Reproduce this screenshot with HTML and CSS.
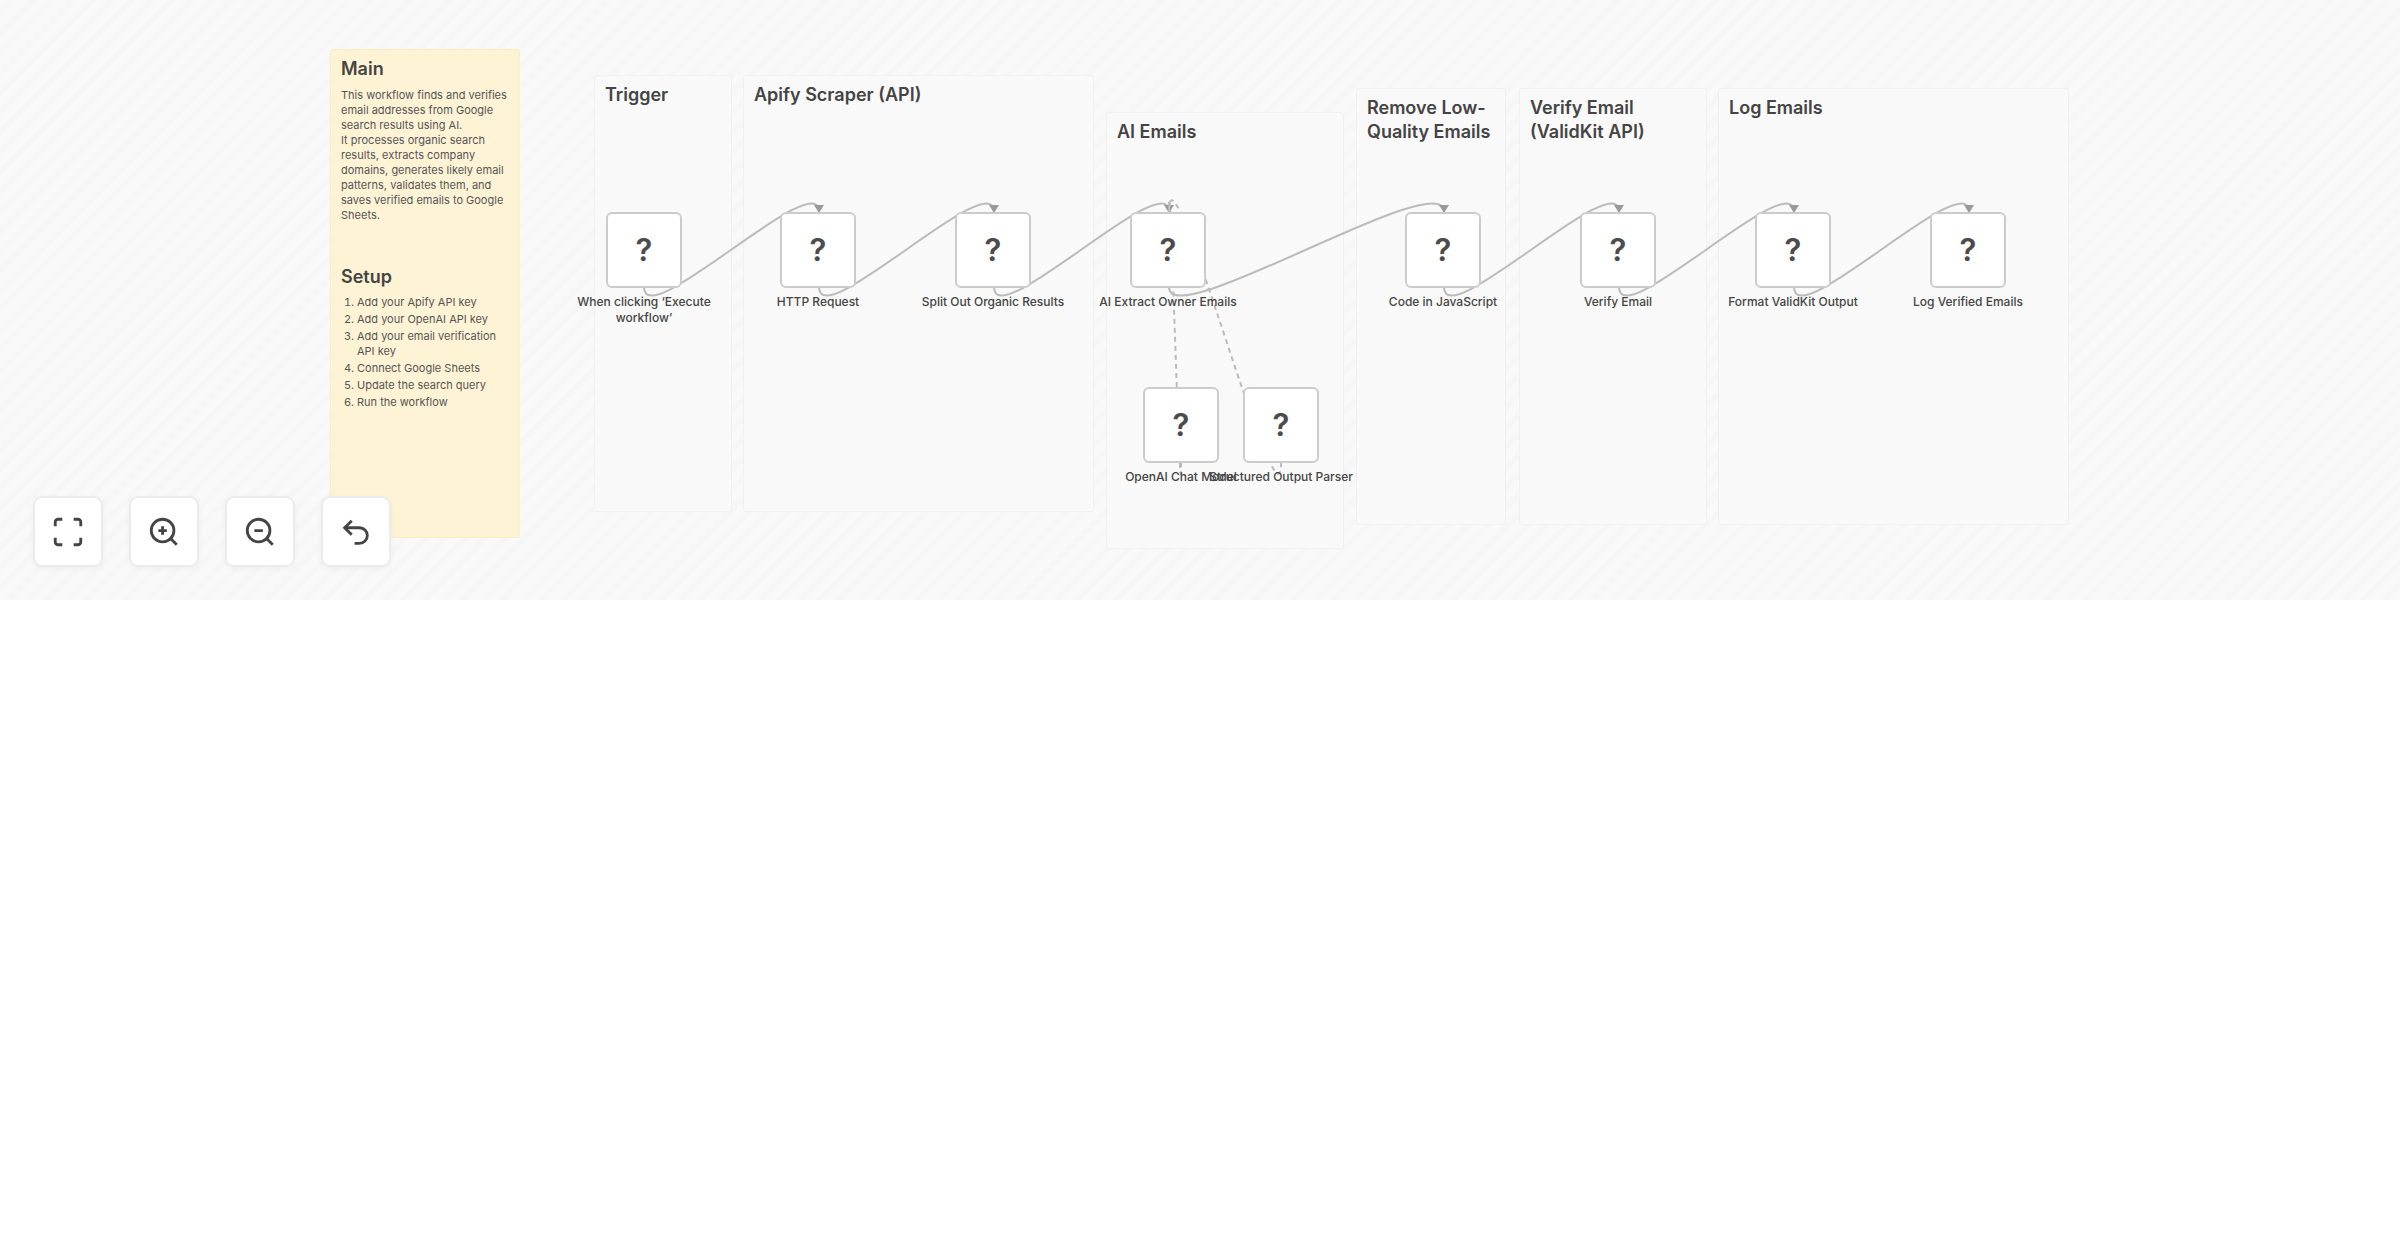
FILE: index.html
```
<!DOCTYPE html>
<html lang="en">
<head>
<meta charset="utf-8">
<title>Email finder workflow</title>
<link rel="stylesheet" href="styles.css">
</head>
<body>
<main class="canvas">
  <section class="sticky sticky-main">
    <h2>Main</h2>
    <p>This workflow finds and verifies email addresses from Google search results using AI.<br>It processes organic search results, extracts company domains, generates likely email patterns, validates them, and saves verified emails to Google Sheets.</p>
    <h2>Setup</h2>
    <ol>
      <li>Add your Apify API key</li>
      <li>Add your OpenAI API key</li>
      <li>Add your email verification API key</li>
      <li>Connect Google Sheets</li>
      <li>Update the search query</li>
      <li>Run the workflow</li>
    </ol>
  </section>
  <section class="sticky trigger"><h2>Trigger</h2></section>
  <section class="sticky scraper"><h2>Apify Scraper (API)</h2></section>
  <section class="sticky ai"><h2>AI Emails</h2></section>
  <section class="sticky filter"><h2>Remove Low-Quality Emails</h2></section>
  <section class="sticky verify"><h2>Verify Email (ValidKit API)</h2></section>
  <section class="sticky log"><h2>Log Emails</h2></section>

  <svg class="edges" aria-hidden="true">
    <defs>
      <marker id="arrow" viewBox="-10 -10 20 20" markerWidth="20" markerHeight="20" markerUnits="userSpaceOnUse" orient="auto" refX="0" refY="0">
        <path class="arrow" d="M-7 -5 1 0 -7 5z"/>
      </marker>
    </defs>
    <path class="edge" d="M644 287C644 335 819 164 819 212"/>
    <path class="edge" d="M819 287C819 335 994 164 994 212"/>
    <path class="edge" d="M994 287C994 335 1169 164 1169 212"/>
    <path class="edge" d="M1169 287C1169 335 1444 164 1444 212"/>
    <path class="edge" d="M1444 287C1444 335 1619 164 1619 212"/>
    <path class="edge" d="M1619 287C1619 335 1794 164 1794 212"/>
    <path class="edge" d="M1794 287C1794 335 1969 164 1969 212"/>
    <path class="edge dashed" d="M1181 462C1181 549 1169 125 1169 212"/>
    <path class="edge dashed" d="M1281 462C1281 549 1169 125 1169 212"/>
  </svg>

  <div class="node n1"><div class="box">?</div><span>When clicking ‘Execute workflow’</span></div>
  <div class="node n2"><div class="box">?</div><span>HTTP Request</span></div>
  <div class="node n3"><div class="box">?</div><span>Split Out Organic Results</span></div>
  <div class="node n4"><div class="box">?</div><span>AI Extract Owner Emails</span></div>
  <div class="node n5"><div class="box">?</div><span>Code in JavaScript</span></div>
  <div class="node n6"><div class="box">?</div><span>Verify Email</span></div>
  <div class="node n7"><div class="box">?</div><span>Format ValidKit Output</span></div>
  <div class="node n8"><div class="box">?</div><span>Log Verified Emails</span></div>
  <div class="node n9"><div class="box">?</div><span>OpenAI Chat Model</span></div>
  <div class="node n10"><div class="box">?</div><span>Structured Output Parser</span></div>

  <div class="controls">
    <button type="button" aria-label="Fit to view"><svg viewBox="0 0 24 24"><path d="M3 8V5a2 2 0 0 1 2-2h3M16 3h3a2 2 0 0 1 2 2v3M21 16v3a2 2 0 0 1-2 2h-3M8 21H5a2 2 0 0 1-2-2v-3"/></svg></button>
    <button type="button" aria-label="Zoom in"><svg viewBox="0 0 24 24"><circle cx="11" cy="11" r="8"/><path d="m21 21-4-4M11 8v6M8 11h6"/></svg></button>
    <button type="button" aria-label="Zoom out"><svg viewBox="0 0 24 24"><circle cx="11" cy="11" r="8"/><path d="m21 21-4-4M8 11h6"/></svg></button>
    <button type="button" aria-label="Reset zoom"><svg viewBox="0 0 24 24"><path d="M9 14 4 9l5-5"/><path d="M4 9h10.500a5.500 5.500 0 0 1 0 11H11"/></svg></button>
  </div>
</main>
</body>
</html>
```
FILE: styles.css
```
* { box-sizing: border-box; }

body {
  margin: 0;
  background: #fff;
  color: #444;
  font-family: Inter, "Liberation Sans", sans-serif;
}

.canvas {
  position: relative;
  height: 600px;
  overflow: hidden;
  background: repeating-linear-gradient(135deg, #f9f9f9 0, #f9f9f9 5px, #f6f6f6 8px, #f6f6f6 11px, #f9f9f9 14px);
}

.sticky {
  position: absolute;
  padding: 7px 10px;
  border: 1px solid #f0f0f0;
  border-radius: 3px;
  background: #f9f9f9;
}

.sticky h2 {
  margin: 0;
  font-size: 18px;
  line-height: 24px;
  font-weight: 600;
}

.sticky-main {
  left: 330px;
  top: 49px;
  width: 190px;
  height: 489px;
  border-color: #fdecc0;
  background: #fff3d6;
}

.sticky-main p {
  margin: 7px 0 42px;
  font-size: 11px;
  line-height: 15px;
  color: #555;
}

.sticky-main ol {
  margin: 6px 0 0;
  padding-left: 16px;
  font-size: 11px;
  line-height: 15px;
  color: #555;
}

.sticky-main li { margin-bottom: 2px; }

.trigger { left: 594px; top: 75px; width: 138px; height: 437px; }
.scraper { left: 743px; top: 75px; width: 351px; height: 437px; }
.ai { left: 1106px; top: 112px; width: 238px; height: 437px; }
.filter { left: 1356px; top: 88px; width: 150px; height: 437px; }
.verify { left: 1519px; top: 88px; width: 188px; height: 437px; }
.log { left: 1718px; top: 88px; width: 351px; height: 437px; }

.edges {
  position: absolute;
  inset: 0;
  width: 100%;
  height: 100%;
}

.edge {
  fill: none;
  stroke: #bbb;
  stroke-width: 2;
  marker-end: url(#arrow);
}

.dashed {
  stroke-dasharray: 5 4;
  marker-end: none;
}

.arrow { fill: #999; }

.node {
  position: absolute;
  top: 212px;
  width: 150px;
  display: flex;
  flex-direction: column;
  align-items: center;
  gap: 6px;
  font-size: 12px;
  line-height: 16px;
  font-weight: 500;
  text-align: center;
}

.node span { margin: 0 -10px; }

.box {
  width: 76px;
  height: 76px;
  display: grid;
  place-items: center;
  border: 2px solid #ccc;
  border-radius: 6px;
  background: #fff;
  color: #4c4c4c;
  font-size: 31px;
  line-height: 40px;
  font-weight: 600;
}

.n1 { left: 569px; }
.n2 { left: 743px; }
.n3 { left: 918px; }
.n4 { left: 1093px; }
.n5 { left: 1368px; }
.n6 { left: 1543px; }
.n7 { left: 1718px; }
.n8 { left: 1893px; }
.n9 { left: 1106px; top: 387px; }
.n10 { left: 1206px; top: 387px; }

.controls {
  position: absolute;
  left: 33px;
  bottom: 33px;
  display: flex;
  gap: 26px;
}

.controls button {
  width: 70px;
  height: 71px;
  padding: 0;
  display: grid;
  place-items: center;
  border: 2px solid #ececec;
  border-radius: 9px;
  background: #fff;
  box-shadow: 0 2px 6px #0000000a;
}

.controls svg {
  width: 34px;
  height: 34px;
  fill: none;
  stroke: #444;
  stroke-width: 2;
}
```
